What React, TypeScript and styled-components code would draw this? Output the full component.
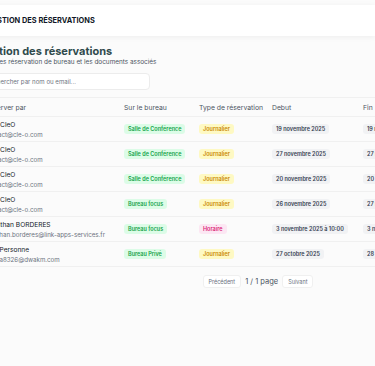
import * as React from 'react';
import styled, { createGlobalStyle } from 'styled-components';

const GlobalStyle = createGlobalStyle`
    body {
        margin: 0;
        background: #fbfbfb;
        font-family: Inter, "Noto Sans", sans-serif;
        overflow: hidden;
    }
`;

const TopBar = styled.header`
    margin-top: 5px;
    height: 31px;
    background: #ffffff;
    box-shadow: 0 1px 6px rgba(0, 0, 0, 0.06);
    display: flex;
    align-items: center;
    margin-left: -13px;

    h1 {
        margin: 0;
        font-size: 7.4px;
        font-weight: 700;
        color: #111827;
    }
`;

const Content = styled.main`
    margin-left: -22px;
    width: 560px;
    padding-top: 8px;
`;

const Title = styled.h2`
    margin: 0;
    font-size: 11px;
    font-weight: 700;
    color: #2f4a4c;
    line-height: 14px;
`;

const Subtitle = styled.p`
    margin: 0;
    font-size: 6.4px;
    color: #4b5563;
    line-height: 9px;
`;

const Search = styled.input`
    display: block;
    box-sizing: border-box;
    margin-top: 6px;
    width: 172px;
    height: 17px;
    border: 1px solid #ececec;
    border-radius: 4px;
    background: #ffffff;
    padding: 0 7px;
    font-family: inherit;
    font-size: 6.1px;
    color: #374151;
    outline: none;

    &::placeholder {
        color: #6b7280;
    }
`;

const Table = styled.div`
    margin-top: 7px;
    border-top: 1px solid #f0f0f0;
`;

const Row = styled.div<{ $head?: boolean }>`
    display: grid;
    grid-template-columns: 139px 75px 73px 91px 1fr;
    align-items: center;
    padding-left: 7px;
    height: ${ p => p.$head ? 18 : 24 }px;
    border-bottom: 1px solid #f0f0f0;
`;

const HeadCell = styled.div`
    font-size: 6.8px;
    color: #4b5563;
`;

const Person = styled.div`
    display: flex;
    flex-direction: column;
    gap: 2px;

    .name {
        font-size: 6.6px;
        color: #111827;
    }
    .mail {
        font-size: 6.2px;
        color: #6b7280;
    }
`;

const tones = {
    green: [ '#dcfce7', '#16a34a' ],
    yellow: [ '#fef9c3', '#ca8a04' ],
    pink: [ '#fce7f3', '#db2777' ],
    gray: [ '#f1f2f4', '#374151' ],
};

const Badge = styled.span<{ $tone: keyof typeof tones }>`
    justify-self: start;
    display: inline-flex;
    align-items: center;
    height: 10px;
    padding: 0 4px;
    border-radius: 3px;
    font-size: 5.5px;
    font-weight: 600;
    white-space: nowrap;
    background: ${ p => tones[ p.$tone ][ 0 ] };
    color: ${ p => tones[ p.$tone ][ 1 ] };
`;

const Pager = styled.div`
    display: flex;
    justify-content: center;
    align-items: center;
    gap: 4px;
    margin-top: 8px;

    span {
        font-size: 7.5px;
        color: #4b5563;
    }
`;

const PageButton = styled.button`
    height: 13px;
    padding: 0 5px;
    border: 1px solid #f0f0f0;
    border-radius: 3px;
    background: #ffffff;
    font-family: inherit;
    font-size: 5.5px;
    color: #6b7280;
`;

const rows = [
    { name: 'Test CleO', mail: 'contact@cle-o.com', office: 'Salle de Conférence', type: 'Journalier', start: '19 novembre 2025', end: '19 novembre 2025' },
    { name: 'Test CleO', mail: 'contact@cle-o.com', office: 'Salle de Conférence', type: 'Journalier', start: '27 novembre 2025', end: '27 novembre 2025' },
    { name: 'Test CleO', mail: 'contact@cle-o.com', office: 'Salle de Conférence', type: 'Journalier', start: '20 novembre 2025', end: '20 novembre 2025' },
    { name: 'Test CleO', mail: 'contact@cle-o.com', office: 'Bureau focus', type: 'Journalier', start: '26 novembre 2025', end: '27 novembre 2025' },
    { name: 'Jonathan BORDERES', mail: 'jonathan.borderes@link-apps-services.fr', office: 'Bureau focus', type: 'Horaire', start: '3 novembre 2025 à 10:00', end: '3 novembre 2025 à 12:00' },
    { name: 'Une Personne', mail: 'emma8326@dwakm.com', office: 'Bureau Privé', type: 'Journalier', start: '27 octobre 2025', end: '28 octobre 2025' },
];

const App = () => (
    <>
        <GlobalStyle/>
        <TopBar>
            <h1>GESTION DES RÉSERVATIONS</h1>
        </TopBar>
        <Content>
            <Title>Gestion des réservations</Title>
            <Subtitle>Gérez les réservation de bureau et les documents associés</Subtitle>
            <Search placeholder="Rechercher par nom ou email..."/>
            <Table>
                <Row $head>
                    <HeadCell>Réserver par</HeadCell>
                    <HeadCell>Sur le bureau</HeadCell>
                    <HeadCell>Type de réservation</HeadCell>
                    <HeadCell>Debut</HeadCell>
                    <HeadCell>Fin</HeadCell>
                </Row>
                { rows.map( ( r, i ) => (
                    <Row key={ i }>
                        <Person>
                            <span className="name">{ r.name }</span>
                            <span className="mail">{ r.mail }</span>
                        </Person>
                        <Badge $tone="green">{ r.office }</Badge>
                        <Badge $tone={ r.type === 'Horaire' ? 'pink' : 'yellow' }>{ r.type }</Badge>
                        <Badge $tone="gray">{ r.start }</Badge>
                        <Badge $tone="gray">{ r.end }</Badge>
                    </Row>
                ) ) }
            </Table>
            <Pager>
                <PageButton>Précédent</PageButton>
                <span>1 / 1 page</span>
                <PageButton>Suivant</PageButton>
            </Pager>
        </Content>
    </>
);

export default App;
